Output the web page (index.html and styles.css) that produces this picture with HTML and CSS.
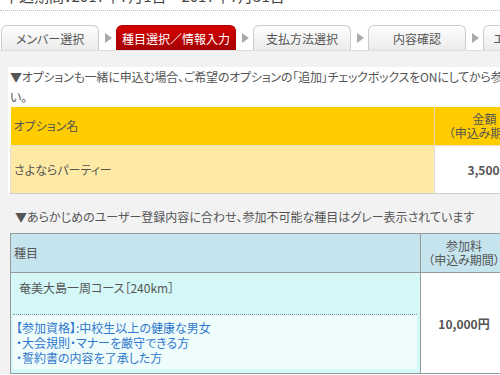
FILE: index.html
```html
<!DOCTYPE html>
<html lang="ja">
<head>
<meta charset="utf-8">
<link rel="stylesheet" href="styles.css">
</head>
<body>
<div class="page">
  <div class="title">申込期間：2017年7月1日～2017年7月31日</div>
  <div class="tabs">
    <div class="tab">メンバー選択</div>
    <div class="arrow"></div>
    <div class="tab active">種目選択／情報入力</div>
    <div class="arrow"></div>
    <div class="tab">支払方法選択</div>
    <div class="arrow"></div>
    <div class="tab">内容確認</div>
    <div class="arrow"></div>
    <div class="tab">エントリー完了</div>
  </div>
  <div class="panel">
    <div class="box">
      <p class="lead">▼オプションも一緒に申込む場合、ご希望のオプションの「追加」チェックボックスをONにしてから参加申込を行ってくださ<br>い。</p>
      <table class="opt">
        <tr>
          <th class="opt-name">オプション名</th>
          <th class="opt-price">金額<br>（申込み期間）</th>
        </tr>
        <tr>
          <td class="opt-name">さよならパーティー</td>
          <td class="opt-price"><span class="price">3,500円</span></td>
        </tr>
      </table>
    </div>
    <p class="lead2">▼あらかじめのユーザー登録内容に合わせ、参加不可能な種目はグレー表示されています</p>
    <table class="ev">
      <tr>
        <th class="ev-name">種目</th>
        <th class="ev-price">参加料<br>（申込み期間）</th>
      </tr>
      <tr>
        <td class="ev-name">
          <div class="ev-title">奄美大島一周コース［240km］</div>
          <div class="ev-note">【参加資格】:中校生以上の健康な男女<br>・大会規則・マナーを厳守できる方<br>・誓約書の内容を了承した方</div>
        </td>
        <td class="ev-price"><span class="price">10,000円</span></td>
      </tr>
    </table>
  </div>
</div>
</body>
</html>
```
FILE: styles.css
```css
html, body {
  margin: 0;
  padding: 0;
  background: #fff;
  overflow: hidden;
}
body {
  font-family: "Noto Sans CJK JP", "Noto Sans", sans-serif;
  font-size: 12px;
  color: #555;
  font-feature-settings: "palt";
}
.page {
  width: 620px;
}
.title {
  margin-top: -13px;
  height: 23px;
  padding-left: 4px;
  font-size: 15px;
  line-height: 18px;
  color: #444;
  border-bottom: 1px dotted #bbb;
  overflow: hidden;
  white-space: nowrap;
}
.tabs {
  display: flex;
  align-items: flex-end;
  margin-top: 14px;
  padding-left: 1px;
}
.tab {
  width: 98px;
  height: 25px;
  box-sizing: border-box;
  border: 1px solid #ccc;
  border-bottom: none;
  border-radius: 6px 6px 0 0;
  background: linear-gradient(#fefefe, #ebebeb);
  color: #555;
  text-align: center;
  line-height: 25px;
  flex: none;
  white-space: nowrap;
}
.tab.active {
  width: 120px;
  border-color: #a00;
  background: linear-gradient(#d60000, #a30000);
  color: #fff;
}
.arrow {
  width: 17px;
  height: 25px;
  flex: none;
  display: flex;
  align-items: center;
  justify-content: center;
}
.arrow::before {
  content: "";
  width: 0;
  height: 0;
  border-top: 5px solid transparent;
  border-bottom: 5px solid transparent;
  border-left: 7px solid #aaa;
  margin-left: 1px;
}
.panel {
  background: #f2f2f2;
  border-top: 1px solid #ddd;
  padding: 16px 0 0 8px;
}
.box {
  background: #fff;
  padding-left: 2px;
}
.lead {
  margin: 0;
  line-height: 20px;
  letter-spacing: -0.2px;
  white-space: nowrap;
}
.opt, .ev {
  border-collapse: collapse;
}
.opt th, .opt td, .ev th, .ev td {
  font-weight: normal;
  padding: 0;
}
.opt th {
  background: #ffcc00;
  line-height: 14px;
  padding: 5px 3px;
  height: 28px;
  border-bottom: 1px solid #e6e0c0;
  white-space: nowrap;
}
.opt th.opt-name {
  text-align: left;
  width: 417px;
}
.opt th.opt-price {
  width: 94px;
  border-left: 1px solid #e3d9ad;
  text-align: center;
}
.opt td {
  height: 47px;
  border-bottom: 1px solid #ccc;
}
.opt td.opt-name {
  background: #ffeaa5;
  padding-left: 3px;
  border-left: 1px solid #ddd;
}
.opt td.opt-price {
  background: #fff;
  border-left: 1px solid #ddd;
  text-align: center;
  padding-left: 10px;
}
.price {
  font-weight: bold;
  color: #555;
}
.lead2 {
  margin: 0;
  padding-left: 7px;
  height: 39px;
  line-height: 46px;
  white-space: nowrap;
}
.ev {
  margin-left: 2px;
  border: 1px solid #999;
  border-right: none;
}
.ev th {
  background: #c6e4ee;
  line-height: 14px;
  padding: 5px 3px;
  height: 28px;
  border-bottom: 1px solid #999;
  white-space: nowrap;
}
.ev th.ev-name {
  text-align: left;
  width: 403px;
}
.ev th.ev-price {
  width: 80px;
  border-left: 1px solid #999;
  text-align: center;
}
.ev td {
  border-bottom: 1px solid #999;
}
.ev td.ev-name {
  background: #d4f8f8;
  padding: 0 3px 4px 2px;
  vertical-align: top;
}
.ev-title {
  padding: 6px 0 0 6px;
  height: 35px;
  border-bottom: 1px dotted #7a9a9a;
}
.ev-note {
  background: #effcfc;
  color: #2f78cc;
  line-height: 15px;
  padding: 5px 0 4px 3px;
}
.ev td.ev-price {
  background: #fff;
  border-left: 1px solid #999;
  text-align: center;
  vertical-align: middle;
}
```
